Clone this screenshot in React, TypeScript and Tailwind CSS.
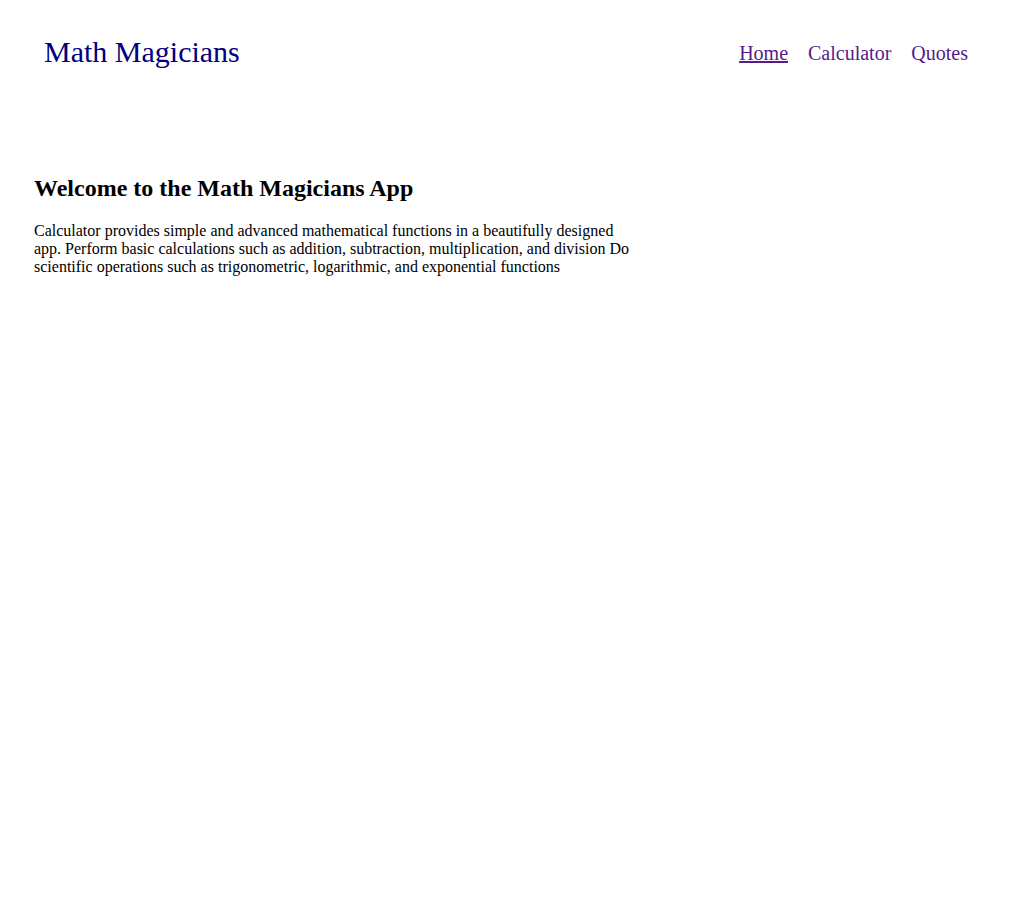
const App = () => {
  return (
    <div className="min-h-screen bg-white text-black font-['Liberation_Serif','Times_New_Roman',serif]">
      <header className="flex items-center justify-between pl-[44px] pr-[49px] pt-[33px]">
        <h1 className="text-[30px] leading-[38px] text-[#000080]">Math Magicians</h1>
        <nav className="pt-[2px]">
          <ul className="flex gap-5 text-[20px] text-[#551a8b]">
            <li><a href="#" className="underline">Home</a></li>
            <li><a href="#">Calculator</a></li>
            <li><a href="#">Quotes</a></li>
          </ul>
        </nav>
      </header>
      <main className="px-[34px] pt-[103px]">
        <h2 className="text-[24px] font-bold leading-[28px]">Welcome to the Math Magicians App</h2>
        <p className="mt-5 w-[610px] text-[16px] leading-[18px]">
          Calculator provides simple and advanced mathematical functions in a beautifully designed app. Perform basic
          calculations such as addition, subtraction, multiplication, and division Do scientific operations such as
          trigonometric, logarithmic, and exponential functions
        </p>
      </main>
    </div>
  );
};

export default App;
